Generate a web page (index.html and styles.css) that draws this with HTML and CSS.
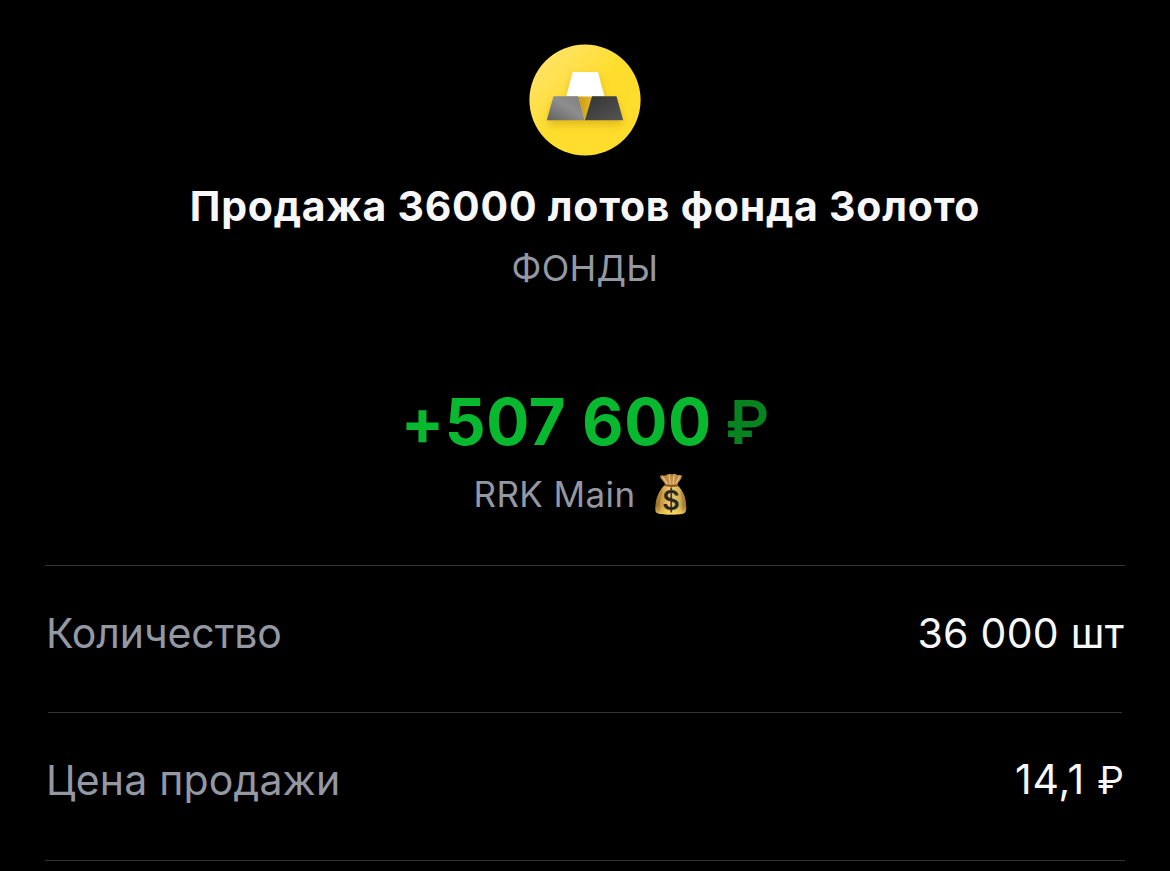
FILE: index.html
```html
<!DOCTYPE html>
<html lang="ru">
<head>
<meta charset="utf-8">
<title>Продажа фонда Золото</title>
<link rel="stylesheet" href="styles.css">
</head>
<body>
<main class="operation">
  <header class="summary">
    <svg class="logo" viewBox="0 0 112 112" aria-hidden="true">
      <defs>
        <linearGradient id="disc" x1="0" y1="0" x2="1" y2="1">
          <stop offset="0" stop-color="#ffe579"/><stop offset=".5" stop-color="#ffdd2d"/><stop offset="1" stop-color="#ffdd2d"/>
        </linearGradient>
        <linearGradient id="barLeft" x1="0" y1="1" x2="1" y2="0">
          <stop offset="0" stop-color="#606060"/><stop offset=".55" stop-color="#8e8e8e"/><stop offset="1" stop-color="#7c7c7c"/>
        </linearGradient>
        <linearGradient id="barRight" x1="0" y1="0" x2="1" y2="1">
          <stop offset="0" stop-color="#333"/><stop offset="1" stop-color="#555"/>
        </linearGradient>
        <linearGradient id="gap" x1="0" y1="0" x2="1" y2="0">
          <stop offset="0" stop-color="#c99b16"/><stop offset="1" stop-color="#e8b928"/>
        </linearGradient>
        <filter id="soft" x="-30%" y="-30%" width="160%" height="170%"><feGaussianBlur stdDeviation="4"/></filter>
      </defs>
      <circle cx="56" cy="56" r="55.600" fill="url(#disc)"/>
      <path d="M43.500 28h26l6 24.500H88L94 77H18l6-24.500h13.500z" fill="#a77b00" opacity=".36" filter="url(#soft)" transform="translate(0 4)"/>
      <path d="M49 52h14.500l-7 25z" fill="url(#gap)"/>
      <path d="M43.700 28h25.300l6.500 24.500h-38.300z" fill="#fff"/>
      <path d="M24.500 52.200h24.500L55.600 76.200H17.800z" fill="url(#barLeft)"/>
      <path d="M63 52.200h24.500l6.700 24H56z" fill="url(#barRight)"/>
    </svg>
    <h1 class="title">Продажа 36000 лотов фонда Золото</h1>
    <p class="category">ФОНДЫ</p>
    <p class="amount"><span class="amount-value">+507 600</span><span class="amount-currency">₽</span></p>
    <p class="account"><span>RRK Main</span>
      <svg class="bag" viewBox="0 0 34 43" aria-hidden="true">
        <defs>
          <linearGradient id="sack" x1="0" y1="0" x2="1" y2="0">
            <stop offset="0" stop-color="#8c6528"/><stop offset=".2" stop-color="#c79b43"/><stop offset=".5" stop-color="#f1d377"/><stop offset=".8" stop-color="#d6ac4d"/><stop offset="1" stop-color="#946b28"/>
          </linearGradient>
          <linearGradient id="base" x1="0" y1="0" x2="0" y2="1">
            <stop offset=".7" stop-color="#ffe05a" stop-opacity="0"/><stop offset="1" stop-color="#ffdc50" stop-opacity=".65"/>
          </linearGradient>
        </defs>
        <path d="M11 12h12c4 3 8.500 10 9 18 .3 4 1 8-1.500 10-3 2-24 2-27.500 0C.5 38.500 1.300 34 1.700 30c.7-7 5.300-15 9.300-18z" fill="url(#sack)"/>
        <path d="M11 12h12c4 3 8.500 10 9 18 .3 4 1 8-1.500 10-3 2-24 2-27.500 0C.5 38.500 1.300 34 1.700 30c.7-7 5.300-15 9.300-18z" fill="url(#base)"/>
        <path d="M6 3c2-1.800 4 .2 6-.7 2-1.800 4-2 6-.8 2-1 3.500-1 5 .5 2 .5 3.500-.8 5 .8-.5 4-4 6-4.500 9.500h-12C10.500 8.500 6.500 6.500 6 3z" fill="#bd8b46"/>
        <path d="M8.500 3.800l5 7M15 2.500l1.500 8.500M20 2.500l-.8 8.500M26 3.500l-4.500 7" fill="none" stroke="#ebc582" stroke-width="1.300"/>
        <path d="M11 12.300q6 1.600 13 0" fill="none" stroke="#80511c" stroke-width="1.700"/>
        <path d="M8 18q-4 10-3 20M27 18q3 10 2 20" fill="none" stroke="#87602a" stroke-width=".7" opacity=".6"/>
        <text class="bag-sign" x="17" y="36.500">$</text>
      </svg>
    </p>
  </header>
  <dl class="details">
    <div class="row"><dt class="label label-quantity">Количество</dt><dd class="value value-quantity">36 000 шт</dd></div>
    <div class="row"><dt class="label label-price">Цена продажи</dt><dd class="value value-price">14,1 <span class="price-currency">₽</span></dd></div>
  </dl>
</main>
</body>
</html>
```
FILE: styles.css
```css
* { box-sizing: border-box; }
body { margin: 0; background: #000; color: #f7f7f8; font-family: Inter, sans-serif; overflow: hidden; }
h1, p, dl, dd { margin: 0; }
.operation { height: 871px; padding: 44px 45px 0; }
.summary { height: 521px; display: flex; flex-direction: column; align-items: center; white-space: nowrap; }
.logo { width: 112px; height: 112px; flex: none; }
.title { margin-top: 25px; font-size: 41px; line-height: 50px; font-weight: 700; letter-spacing: 0.76px; }
.category { margin-top: 15px; font-size: 36px; line-height: 44px; letter-spacing: 0.3px; color: #9398a2; }
.amount { height: 76px; margin-top: 94px; display: flex; gap: 14px; font-size: 64px; line-height: 76px; font-weight: 700; color: #08b92f; }
.amount-value { letter-spacing: 0.55px; }
.amount-currency { font-size: 60px; font-weight: 600; line-height: 76px; color: #07841f; }
.account { margin-top: 12px; display: flex; gap: 18px; padding-right: 9px; font-size: 35px; line-height: 44px; letter-spacing: 0.4px; color: #9398a2; }
.bag { width: 34px; height: 43px; margin-top: 1px; }
.bag-sign { font: 600 27px Inter, sans-serif; letter-spacing: 0; text-anchor: middle; fill: #2b2a22; }
.details { border-top: 1px solid #333; font-size: 41px; line-height: 50px; }
.row { height: 147px; padding: 0 1px 12px; display: flex; align-items: center; justify-content: space-between; }
.row:first-child { margin: 0 3px; border-bottom: 1px solid #333; }
.row:first-child .label { margin-left: -3px; }
.row:first-child .value { margin-right: -3px; }
.row:last-child { height: 148px; padding-bottom: 14px; border-bottom: 1px solid #333; }
.label { color: #9398a2; }
.label-quantity { letter-spacing: -0.1px; }
.label-price { letter-spacing: 0.18px; }
.value-quantity { letter-spacing: 0.25px; }
.value-price { letter-spacing: 0.8px; }
.price-currency { font-size: 38px; letter-spacing: 0; }
```
